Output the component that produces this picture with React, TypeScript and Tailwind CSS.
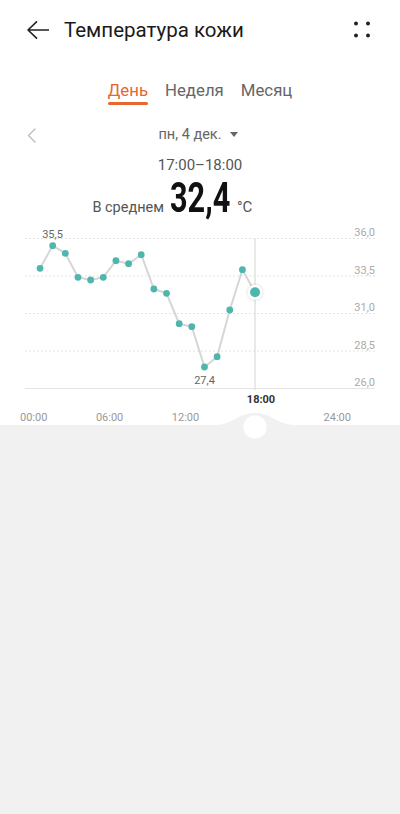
import React from 'react';

const values = [
  268.3, 245.7, 253.3, 277.3, 280, 277.3, 260.7, 263.7, 254.7, 289, 293.3, 323.7,
  326.7, 367, 356.7, 310, 269.7, 292.3,
];

const hourX = (h: number) => 33.7 + h * 12.65;

export default function App() {
  const pts = values.map((y, i) => ({ x: hourX(i + 0.5), y }));
  const last = pts[pts.length - 1];
  const grid = [238.5, 276, 313.5, 351];
  const yLabels = ['36,0', '33,5', '31,0', '28,5', '26,0'];

  return (
    <div className="flex h-[814px] w-full flex-col bg-white font-['Roboto',sans-serif]">
      <div className="relative h-[425px] bg-white">
        {/* Header */}
        <div className="flex h-[60px] items-center pl-[27px] pr-[26px]">
          <svg width="22" height="18" viewBox="0 0 22 18" fill="none">
            <path d="M1 9H21.5M9.5 0.8L1 9L9.5 17.2" stroke="#222" strokeWidth="1.6" strokeLinecap="round" strokeLinejoin="round" />
          </svg>
          <h1 className="ml-[15px] text-[20.5px] leading-none text-[#1a1a1a]">Температура кожи</h1>
          <svg className="ml-auto" width="24" height="24" viewBox="0 0 24 24">
            <circle cx="6" cy="5.5" r="2" fill="#222" />
            <circle cx="18" cy="5.5" r="2" fill="#222" />
            <circle cx="6" cy="17.5" r="2" fill="#222" />
            <circle cx="18" cy="17.5" r="2" fill="#222" />
          </svg>
        </div>

        {/* Tabs */}
        <div className="flex justify-center gap-[17px] pt-[18px]">
          <div className="flex flex-col items-center">
            <span className="text-[16.8px] leading-[24px] text-[#e8662f]">День</span>
            <span className="h-[3px] w-full rounded-full bg-[#e8662f]" />
          </div>
          <span className="text-[16.8px] leading-[24px] text-[#666]">Неделя</span>
          <span className="text-[16.8px] leading-[24px] text-[#666]">Месяц</span>
        </div>

        {/* Date */}
        <div className="mt-[15px] flex h-[30px] items-center px-[27px]">
          <svg width="9" height="15" viewBox="0 0 9 15" fill="none">
            <path d="M8 1L1.5 7.5L8 14" stroke="#bdbdbd" strokeWidth="1.4" strokeLinecap="round" strokeLinejoin="round" />
          </svg>
          <div className="flex flex-1 items-center justify-center pr-[13px]">
            <span className="text-[14.5px] text-[#666]">пн, 4 дек.</span>
            <svg className="ml-[8px]" width="8" height="6" viewBox="0 0 8 6">
              <path d="M0 0H8L4 5Z" fill="#666" />
            </svg>
          </div>
        </div>

        <div className="flex h-[30px] items-center justify-center text-[15px] text-[#555]">17:00–18:00</div>

        {/* Average */}
        <div className="-mt-[3px] grid grid-cols-[1fr_auto_1fr] items-baseline">
          <span className="pr-[6px] text-right text-[14.5px] text-[#555]">В среднем</span>
          <span className="inline-block w-[60px] leading-[42px]">
            <span className="inline-block origin-left scale-x-[0.73] text-[42px] font-bold leading-[42px] text-[#111]">32,4</span>
          </span>
          <span className="pl-[7px] text-[15px] text-[#555]">°C</span>
        </div>

        {/* Chart */}
        <svg className="absolute top-[224px] left-0" width="400" height="201" viewBox="0 224 400 201">
          {grid.map((y) => (
            <line key={y} x1="25" x2="375" y1={y} y2={y} stroke="#e2e2e2" strokeWidth="1" strokeDasharray="2 2" />
          ))}
          <line x1="25" x2="375" y1="388.5" y2="388.5" stroke="#e4e4e4" strokeWidth="1" />
          {yLabels.map((t, i) => (
            <text key={t} x="375" y={236 + i * 37.5} textAnchor="end" fontSize="11" fill="#aaa" fontFamily="Roboto">
              {t}
            </text>
          ))}
          <line x1="255" x2="255" y1="238.5" y2="390" stroke="#e2e2e2" strokeWidth="1.5" />
          <polyline
            points={pts.map((p) => `${p.x},${p.y}`).join(' ')}
            fill="none"
            stroke="#d6d6d6"
            strokeWidth="2"
            strokeLinejoin="round"
          />
          {pts.slice(0, -1).map((p, i) => (
            <circle key={i} cx={p.x} cy={p.y} r="3.4" fill="#4fb6ae" />
          ))}
          <circle cx={last.x} cy={last.y} r="7.5" fill="#fff" style={{ filter: 'drop-shadow(0 0 1.5px rgba(0,0,0,0.18))' }} />
          <circle cx={last.x} cy={last.y} r="5" fill="#4fb6ae" />
          <text x="52.5" y="238" textAnchor="middle" fontSize="11" fill="#666" fontFamily="Roboto">35,5</text>
          <text x="204.5" y="383.5" textAnchor="middle" fontSize="11" fill="#666" fontFamily="Roboto">27,4</text>
          <text x="261" y="402.5" textAnchor="middle" fontSize="11" fontWeight="bold" fill="#333" fontFamily="Roboto">18:00</text>
          {[0, 6, 12, 24].map((h) => (
            <text key={h} x={hourX(h)} y="421" textAnchor="middle" fontSize="11" fill="#999" fontFamily="Roboto">
              {`${String(h).padStart(2, '0')}:00`}
            </text>
          ))}
        </svg>

        {/* Slider handle */}
        <svg className="absolute top-[410px] left-[215px]" width="80" height="32" viewBox="0 0 80 32">
          <path d="M0 15C18 15 24 2.8 40 2.8C56 2.8 62 15 80 15V32H0Z" fill="#f1f1f1" />
          <circle cx="40" cy="17" r="11.6" fill="#fff" />
        </svg>
      </div>
      <div className="flex-1 bg-[#f1f1f1]" />
    </div>
  );
}
